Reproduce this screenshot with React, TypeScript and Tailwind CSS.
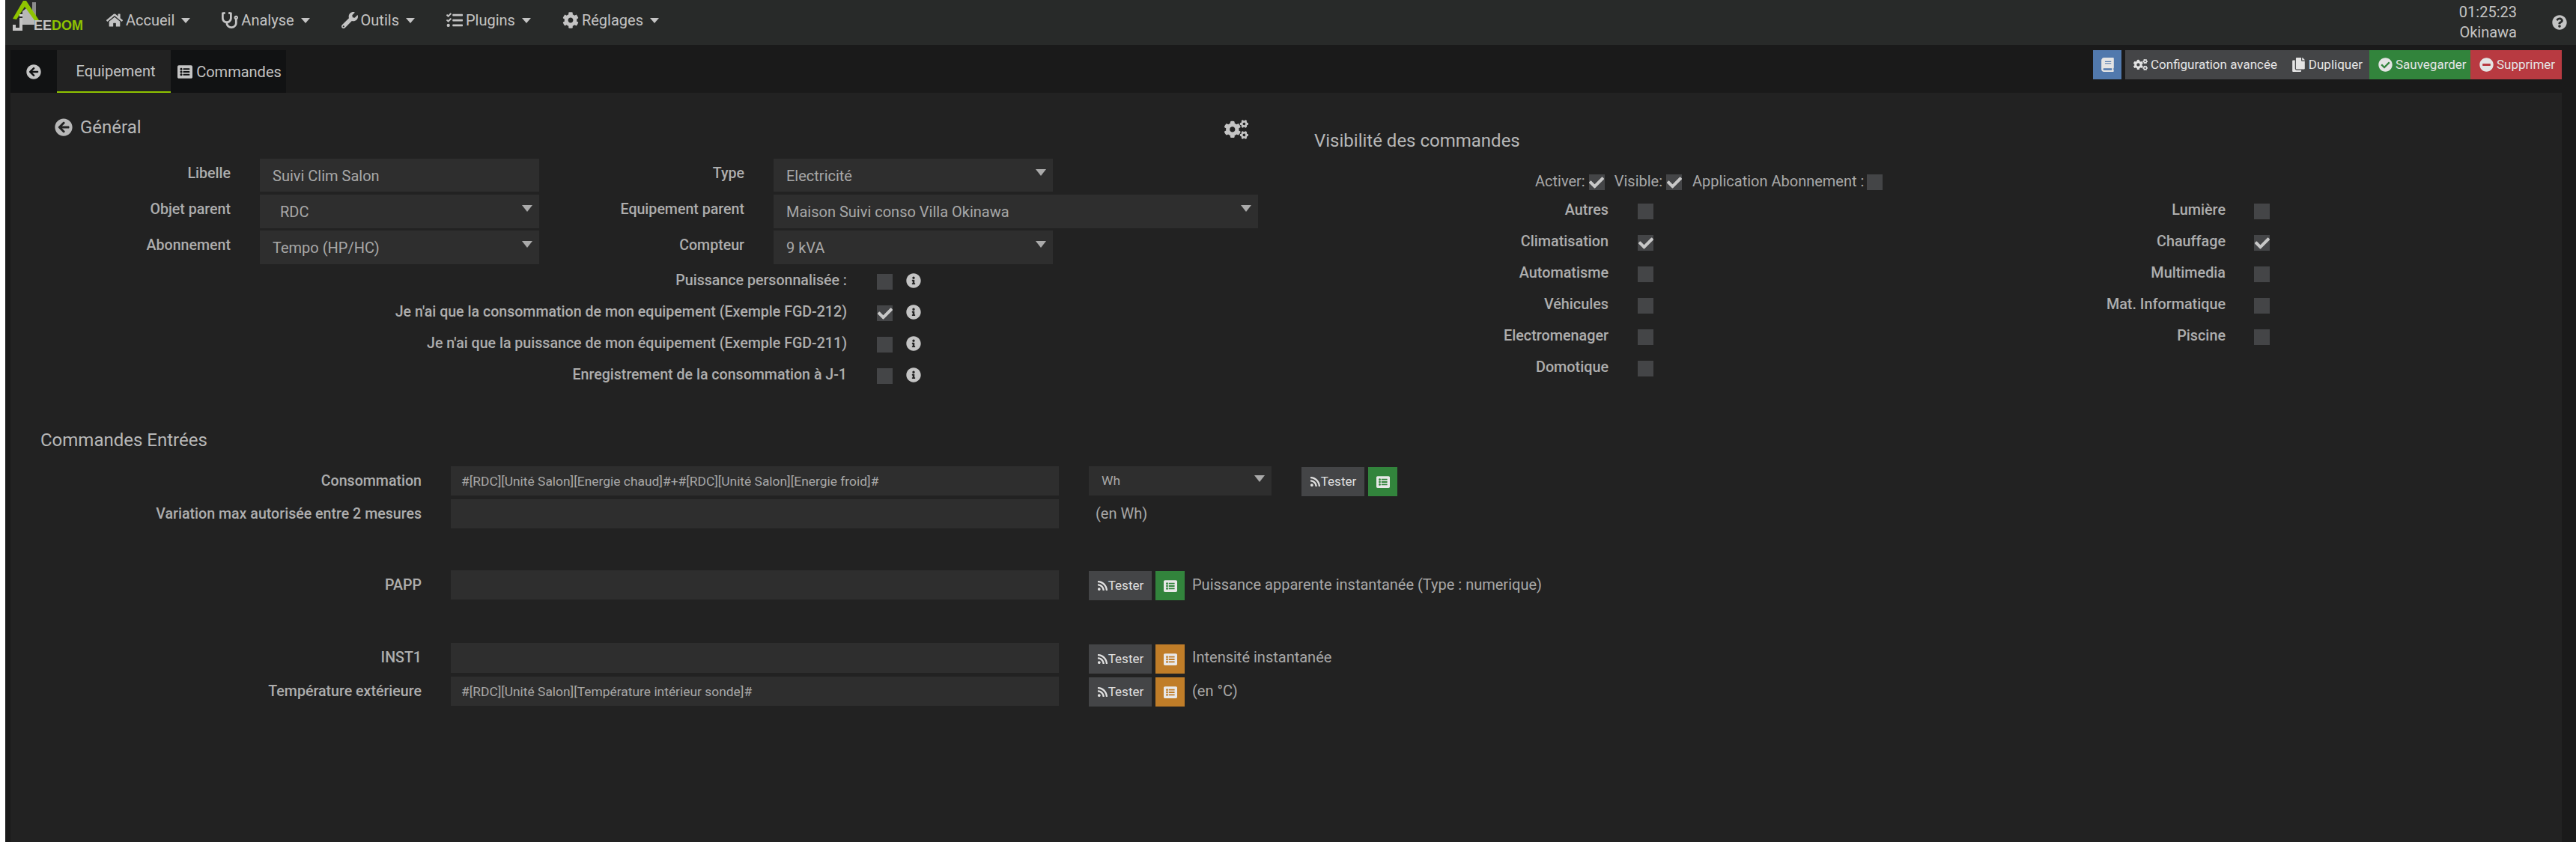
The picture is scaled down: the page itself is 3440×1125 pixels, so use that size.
import type { ReactNode } from 'react'
import {
  FaArrowCircleLeft,
  FaBook,
  FaCheck,
  FaCheckCircle,
  FaCog,
  FaCogs,
  FaCopy,
  FaHome,
  FaInfoCircle,
  FaListAlt,
  FaMinusCircle,
  FaQuestionCircle,
  FaRss,
  FaStethoscope,
  FaTasks,
  FaWrench,
} from 'react-icons/fa'

function Caret({ className = 'mt-[14px]' }: { className?: string }) {
  return <span className={`inline-block w-0 h-0 border-x-[7px] border-x-transparent border-t-[9px] border-t-[#aaaaaa] ${className}`} />
}

function Logo() {
  return (
    <div className="flex items-end w-[135px] h-[60px] pb-[18px]">
      <svg viewBox="0 0 36 42" className="w-[36px] h-[42px] ml-[10px] shrink-0">
        <path d="M26 3 H31 V24 H26 Z" fill="#8c8c8c" />
        <path d="M13 15 L21 9 L29 17 V33 H13 Z" fill="#b8b8b8" />
        <path d="M0 25 L14 1 L18 1 L35 27 L29 27 L16 9 L5 26 Z" fill="#8fc400" />
        <rect x="9" y="19" width="4" height="3" fill="#d8d8d8" />
        <path d="M9 24 H13 V41 H0 V33 H4 V37 H9 Z" fill="#c4c4c4" />
      </svg>
      <span className="font-['Liberation_Sans',sans-serif] font-bold text-[18px] leading-[15px] -ml-[8px]">
        <span className="text-[#c4c4c4]">EE</span>
        <span className="text-[#8fc400]">DOM</span>
      </span>
    </div>
  )
}

function NavItem({ icon, label }: { icon: ReactNode; label: string }) {
  return (
    <div className="flex items-center text-[20px] text-[#c4c4c4]">
      <span className="text-[22px] mr-[4px]">{icon}</span>
      {label}
      <span className="inline-block w-0 h-0 ml-[9px] border-x-[6px] border-x-transparent border-t-[7px] border-t-[#c4c4c4]" />
    </div>
  )
}

function TopButton({ className = '', icon, label }: { className?: string; icon: ReactNode; label?: string }) {
  return (
    <div className={`flex items-center h-[39px] text-[17px] text-[#e4e4e4] whitespace-nowrap ${className}`}>
      <span className="text-[19px]">{icon}</span>
      {label && <span className="ml-[4px]">{label}</span>}
    </div>
  )
}

function Field({ value, width = 'w-[373px]', tall = false, select = false, indent = 'pl-[17px]' }: {
  value: string
  width?: string
  tall?: boolean
  select?: boolean
  indent?: string
}) {
  return (
    <div className={`flex justify-between bg-[#2e2e2e] text-[20px] text-[#a8a8a8] pr-[9px] ${tall ? 'h-[45px]' : 'h-[44px]'} ${width} ${indent}`}>
      <span className="leading-[46px]">{value}</span>
      {select && <Caret />}
    </div>
  )
}

function Label({ children, width }: { children: ReactNode; width: string }) {
  return <div className={`text-right text-[19.6px] font-medium text-[#aeaeae] leading-[39px] shrink-0 ${width}`}>{children}</div>
}

function Box({ checked = false }: { checked?: boolean }) {
  return (
    <span className="flex items-center justify-center h-[21px] w-[21px] shrink-0 bg-[#444547] text-[#c8c8c8]">
      {checked && <FaCheck className="text-[20px]" />}
    </span>
  )
}

function OptionRow({ label, checked }: { label: string; checked?: boolean }) {
  return (
    <div className="flex items-center h-[21px] mb-[21px]">
      <div className="w-[1117px] pb-[4px] text-right text-[19.6px] font-medium text-[#aeaeae]">{label}</div>
      <div className="ml-[40px]">
        <Box checked={checked} />
      </div>
      <FaInfoCircle className="ml-[18px] text-[20px] text-[#c4c4c4] -mt-[4px]" />
    </div>
  )
}

function VisibilityRow({ left, leftChecked, right, rightChecked }: {
  left: string
  leftChecked?: boolean
  right?: string
  rightChecked?: boolean
}) {
  return (
    <div className="flex items-center h-[21px] mb-[21px] text-[19.8px] font-medium text-[#aeaeae]">
      <div className="w-[393px] pb-[3px] text-right">{left}</div>
      <div className="ml-[39px]">
        <Box checked={leftChecked} />
      </div>
      {right && (
        <>
          <div className="w-[764px] pb-[3px] text-right">{right}</div>
          <div className="ml-[38px]">
            <Box checked={rightChecked} />
          </div>
        </>
      )}
    </div>
  )
}

function Tester({ color, className = '' }: { color: string; className?: string }) {
  return (
    <div className={`flex mt-[1px] shrink-0 ${className}`}>
      <div className="flex items-center justify-center w-[84px] h-[39px] bg-[#444547] text-[17px] text-[#e0e0e0]">
        <FaRss className="text-[15px]" />
        Tester
      </div>
      <div className={`flex items-center justify-center w-[39px] h-[39px] ml-[5px] text-[#e8e8e8] text-[18px] ${color}`}>
        <FaListAlt />
      </div>
    </div>
  )
}

function CommandRow({ label, value, tall = false, className = '', children }: {
  label: string
  value?: string
  tall?: boolean
  className?: string
  children?: ReactNode
}) {
  return (
    <div className={`flex items-start ${className}`}>
      <div className="w-[549px] text-right text-[19.6px] font-medium text-[#aeaeae] leading-[39px]">{label}</div>
      <div className={`w-[812px] ml-[39px] pl-[14px] bg-[#2e2e2e] text-[17.4px] text-[#a8a8a8] leading-[40px] ${tall ? 'h-[40px]' : 'h-[39px]'}`}>
        {value}
      </div>
      <div className="flex items-start ml-[40px]">{children}</div>
    </div>
  )
}

function Note({ children, className = '' }: { children: ReactNode; className?: string }) {
  return <div className={`text-[20px] text-[#a8a8a8] whitespace-nowrap ${className}`}>{children}</div>
}

export default function App() {
  return (
    <div className="h-[1125px] flex flex-col overflow-hidden bg-white pl-[7px] font-['Roboto',sans-serif]">
      {/* Navbar */}
      <div className="flex items-center h-[60px] shrink-0 bg-[#282a29]">
        <Logo />
        <div className="flex items-center gap-[42px] pb-[6px]">
          <NavItem icon={<FaHome />} label="Accueil" />
          <NavItem icon={<FaStethoscope />} label="Analyse" />
          <NavItem icon={<FaWrench />} label="Outils" />
          <NavItem icon={<FaTasks />} label="Plugins" />
          <NavItem icon={<FaCog />} label="Réglages" />
        </div>
        <div className="ml-auto flex items-center text-[20px] text-[#c4c4c4]">
          <div className="leading-[27px] text-right whitespace-nowrap">
            01:25:23
            <br />
            Okinawa
          </div>
          <FaQuestionCircle className="ml-[47px] mr-[12px] text-[20px]" />
        </div>
      </div>

      <div className="flex-1 flex flex-col bg-[#1a1a1a] pl-[7px] pr-[19px] pt-[7px] min-h-0">
        {/* Tabs + actions */}
        <div className="flex justify-between h-[57px] shrink-0">
          <div className="flex text-[20px] text-[#c4c4c4] h-[57px]">
            <div className="flex items-center justify-center w-[62px] bg-[#111213]">
              <FaArrowCircleLeft className="text-[20px]" />
            </div>
            <div className="flex items-center justify-center w-[152px] pl-[5px] bg-[#222222] border-b-2 border-[#8fc400]">Equipement</div>
            <div className="flex items-center justify-center w-[154px] pl-[3px] bg-[#111213]">
              <FaListAlt className="text-[20px] mr-[5px]" />
              Commandes
            </div>
          </div>
          <div className="flex h-[39px]">
            <TopButton className="w-[38px] justify-center bg-[#5179ad] mr-[5px]" icon={<FaBook />} />
            <div className="flex justify-between w-[326px] pl-[11px] pr-[9px] bg-[#444547]">
              <TopButton icon={<FaCogs />} label="Configuration avancée" />
              <TopButton icon={<FaCopy />} label="Dupliquer" />
            </div>
            <TopButton className="w-[135px] pl-[12px] bg-[#32843c]" icon={<FaCheckCircle />} label="Sauvegarder" />
            <TopButton className="w-[122px] pl-[12px] bg-[#b83a41]" icon={<FaMinusCircle />} label="Supprimer" />
          </div>
        </div>

        {/* Panel */}
        <div className="flex-1 bg-[#222222]">
          <div className="flex">
            <div className="w-[1741px] shrink-0 pt-[34px]">
              <div className="flex items-center h-[24px] pl-[59px] pr-[88px] text-[24px] text-[#b8b8b8]">
                <FaArrowCircleLeft className="text-[24px] mr-[10px]" />
                Général
                <FaCogs className="ml-auto text-[32px] text-[#c4c4c4] mt-[5px]" />
              </div>

              <div className="flex mt-[30px]">
                <Label width="w-[294px]">Libelle</Label>
                <div className="ml-[39px]">
                  <Field value="Suivi Clim Salon" />
                </div>
                <Label width="w-[274px]">Type</Label>
                <div className="ml-[39px]">
                  <Field value="Electricité" select />
                </div>
              </div>
              <div className="flex mt-[4px]">
                <Label width="w-[294px]">Objet parent</Label>
                <div className="ml-[39px]">
                  <Field value="RDC" tall select indent="pl-[27px]" />
                </div>
                <Label width="w-[274px]">Equipement parent</Label>
                <div className="ml-[39px]">
                  <Field value="Maison Suivi conso Villa Okinawa" width="w-[647px]" tall select />
                </div>
              </div>
              <div className="flex mt-[3px] mb-[13px]">
                <Label width="w-[294px]">Abonnement</Label>
                <div className="ml-[39px]">
                  <Field value="Tempo (HP/HC)" tall select />
                </div>
                <Label width="w-[274px]">Compteur</Label>
                <div className="ml-[39px]">
                  <Field value="9 kVA" tall select />
                </div>
              </div>

              <OptionRow label="Puissance personnalisée :" />
              <OptionRow label="Je n'ai que la consommation de mon equipement (Exemple FGD-212)" checked />
              <OptionRow label="Je n'ai que la puissance de mon équipement (Exemple FGD-211)" />
              <OptionRow label="Enregistrement de la consommation à J-1" />
            </div>

            <div className="flex-1 pt-[50px]">
              <div className="text-[24px] leading-[28px] text-[#b8b8b8]">Visibilité des commandes</div>
              <div className="flex items-center h-[21px] mt-[31px] mb-[18px] pl-[295px] text-[20px] text-[#a8a8a8]">
                <span className="pb-[3px]">Activer:</span>
                <span className="ml-[5px] mr-[13px]">
                  <Box checked />
                </span>
                <span className="pb-[3px]">Visible:</span>
                <span className="ml-[5px] mr-[14px]">
                  <Box checked />
                </span>
                <span className="pb-[3px]">Application Abonnement :</span>
                <span className="ml-[4px]">
                  <Box />
                </span>
              </div>
              <VisibilityRow left="Autres" right="Lumière" />
              <VisibilityRow left="Climatisation" leftChecked right="Chauffage" rightChecked />
              <VisibilityRow left="Automatisme" right="Multimedia" />
              <VisibilityRow left="Véhicules" right="Mat. Informatique" />
              <VisibilityRow left="Electromenager" right="Piscine" />
              <VisibilityRow left="Domotique" />
            </div>
          </div>

          <div className="text-[24px] leading-[30px] text-[#b8b8b8] pl-[40px] mt-[39px]">Commandes Entrées</div>

          <CommandRow className="mt-[20px]" label="Consommation" value="#[RDC][Unité Salon][Energie chaud]#+#[RDC][Unité Salon][Energie froid]#">
            <div className="flex justify-between w-[244px] h-[39px] pl-[17px] pr-[9px] bg-[#2e2e2e] text-[17.4px] text-[#a8a8a8] leading-[38px]">
              Wh
              <Caret className="mt-[12px]" />
            </div>
            <Tester color="bg-[#32843c]" className="ml-[40px]" />
          </CommandRow>
          <CommandRow className="mt-[4px]" label="Variation max autorisée entre 2 mesures">
            <Note className="ml-[9px] leading-[39px]">(en Wh)</Note>
          </CommandRow>
          <CommandRow className="mt-[56px]" label="PAPP">
            <Tester color="bg-[#32843c]" />
            <Note className="ml-[10px] leading-[39px]">Puissance apparente instantanée (Type : numerique)</Note>
          </CommandRow>
          <CommandRow className="mt-[57px]" label="INST1" tall>
            <div className="mt-[1px]">
              <Tester color="bg-[#c07d28]" />
            </div>
            <Note className="ml-[10px] leading-[38px]">Intensité instantanée</Note>
          </CommandRow>
          <CommandRow className="mt-[4px]" label="Température extérieure" value="#[RDC][Unité Salon][Température intérieur sonde]#">
            <Tester color="bg-[#c07d28]" />
            <Note className="ml-[10px] leading-[38px]">(en °C)</Note>
          </CommandRow>
        </div>
      </div>
    </div>
  )
}
